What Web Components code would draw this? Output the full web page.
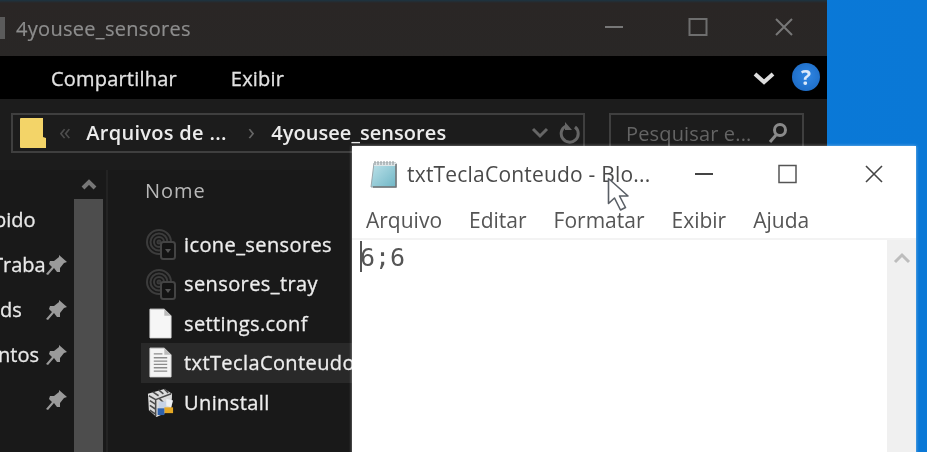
<!doctype html>
<html lang="pt"><head><meta charset="utf-8"><title>4yousee_sensores</title>
<style>
html,body{margin:0;height:100%;overflow:hidden;background:#0a78d6}
body{font-family:"Open Sans","Noto Sans",sans-serif}
</style></head><body>
<x-desktop>
  <x-explorer></x-explorer>
  <x-notepad></x-notepad>
  <x-pointer></x-pointer>
</x-desktop>
<script>
const ICONS={
 lockglobe:`<svg viewBox="0 0 30 32" width="30" height="32" fill="none"><g stroke="#3c3c3c" stroke-width="2"><circle cx="13" cy="14" r="12"/><circle cx="13" cy="14" r="8.500"/><circle cx="13" cy="14" r="5"/><circle cx="13" cy="14" r="1.500"/></g><rect x="15" y="14" width="14" height="17" rx="2.500" fill="#141414" stroke="#444" stroke-width="2"/><path d="M19 21h6l-3 4z" fill="#555"/></svg>`,
 blank:`<svg viewBox="0 0 24 32" width="23" height="31"><path d="M1 1h15l7 7v23H1z" fill="#f6f6f6" stroke="#ddd"/><path d="M16 1v7h7z" fill="#bbb"/></svg>`,
 text:`<svg viewBox="0 0 24 32" width="23" height="31"><path d="M1 1h15l7 7v23H1z" fill="#f4f4f4" stroke="#ddd"/><path d="M16 1v7h7z" fill="#bbb"/><path d="M5 7h9M5 11h14M5 14.500h14M5 18h14M5 21.500h14M5 25h14" stroke="#8b8b8b" stroke-width="1.400"/></svg>`,
 setup:`<svg viewBox="0 0 30 32" width="29" height="31"><path d="M2 7l17-5 8 5-1 17-15 7-8-7z" fill="#dcdcdc"/><path d="M3 9l7 4v17M10 13l16-6M4 14l6 4M4 19l6 4M4 24l6 4M7 5l6 4M13 3l5 4M19 2l4 4M14 12l4 4" stroke="#4a4a4a" stroke-width="1.600" fill="none"/><path d="M13 15h8v7h-8z" fill="#c7d3e6"/><path d="M19 21h9v6h-9z" fill="#e5a824"/><path d="M12 22h7v7h-7z" fill="#2f62ad"/><path d="M21 12l7 2-2 7-5-2z" fill="#eef1f5"/></svg>`,
 pin:`<svg viewBox="0 0 22 22" width="22" height="22"><path d="M13 1l8 7-3 1-4 5 0 4-3 0-3-4-6 7-2-1 6-7-3-3 1-3 4 0 5-4z" fill="#9a9a9a"/></svg>`,
 folder:`<svg viewBox="0 0 26 31" width="26" height="31"><path d="M0 1a1 1 0 0 1 1-1h22v19l3 1v10H1a1 1 0 0 1-1-1z" fill="#f3d468"/></svg>`,
 notepad:`<svg viewBox="0 0 28 28" width="28" height="28"><defs><linearGradient id="g" x1="0" y1="0" x2="1" y2="1"><stop offset="0" stop-color="#bfe3ea"/><stop offset="1" stop-color="#6fb6c6"/></linearGradient></defs><path d="M5 3h22v24H2z" fill="url(#g)" stroke="#9aa6ab"/><path d="M5 3h22v3H5z" fill="#dfe6e8"/><path d="M6 1v4M9 1v4M12 1v4M15 1v4M18 1v4M21 1v4M24 1v4" stroke="#8b9497"/><path d="M27 4v23H4" fill="none" stroke="#6d7477" stroke-width="1.500"/></svg>`
};
function def(name,html,init){customElements.define(name,class extends HTMLElement{
  constructor(){super();this.attachShadow({mode:"open"}).innerHTML=html}
  connectedCallback(){init&&init.call(this,this.shadowRoot)}
})}
def("x-desktop",`<style>
:host{display:block;position:relative;width:927px;height:452px;overflow:hidden;
background:linear-gradient(90deg,#0b74cf,#0a7bdc 40%,#0a78d6);filter:blur(.55px)}
</style><slot></slot>`);

def("x-file",`<style>
:host{display:flex;align-items:center;height:39.5px;padding-left:4px;gap:8px;color:#ededed;font-size:20px;letter-spacing:.4px;-webkit-text-stroke:.3px #ededed;white-space:nowrap;box-sizing:border-box}
:host([hot]){background:#292929}
#i{width:31px;display:flex;justify-content:center;flex:none}
</style><div id="i"></div><slot></slot>`,function(r){r.getElementById("i").innerHTML=ICONS[this.getAttribute("icon")]});

def("x-nav",`<style>
:host{display:flex;align-items:center;height:45px;width:74px;color:#e8e8e8;font-size:20px;-webkit-text-stroke:.3px #e8e8e8;box-sizing:border-box;overflow:hidden}
#t{flex:none;white-space:nowrap}
#p{flex:none;margin-left:1px;display:flex}
</style><div id="t"><slot></slot></div><div id="p"></div>`,function(r){
 if(this.hasAttribute("pin"))r.getElementById("p").innerHTML=ICONS.pin;
 const s=+(this.getAttribute("shift")||0),t=r.getElementById("t");
 t.style.marginLeft=s+"px";t.style.width=(45-s)+"px";
});

def("x-explorer",`<style>
:host{position:absolute;left:0;top:0;width:827px;height:452px;display:flex;flex-direction:column;background:#191919;overflow:hidden}
.title{height:56px;flex:none;box-sizing:border-box;background:linear-gradient(#1d3442 0,#2a2625 3px,#292726 100%);display:flex;align-items:center;color:#8d8d8d;font-size:20px;letter-spacing:.3px;-webkit-text-stroke:.2px #8d8d8d}
.mark{width:5px;height:22px;background:#5b5b5b;margin-right:11px;flex:none}
.title .name{flex:1}
.wb{flex:none;display:flex;align-items:center;justify-content:center;width:20px;height:20px;margin-top:-2px}
.ribbon{height:43px;flex:none;background:#000;display:flex;align-items:center;color:#e2e2e2;font-size:20px;letter-spacing:.2px;-webkit-text-stroke:.3px #e2e2e2}
.ribbon span:first-child{margin-left:51px;margin-top:2px}.ribbon span:nth-child(2){margin-left:54px;flex:1;margin-top:2px}
.help{width:28px;height:28px;border-radius:50%;background:radial-gradient(circle at 55% 45%,#2f86e4,#1864bd);color:#dbe9fa;font-weight:700;font-size:21px;display:flex;align-items:center;justify-content:center;margin:-1px 7px 0 17px;line-height:1;-webkit-text-stroke:0}
.addr{height:71px;flex:none;background:#1c1c1c;display:flex;align-items:flex-start;padding:14px 0 0 11px;box-sizing:border-box;gap:24px}
.box{height:40px;box-sizing:border-box;border:2px solid #3f3f3f;display:flex;align-items:center;flex:none}
.path{width:574px;padding-left:7px;color:#ececec;font-size:20px;font-weight:600;letter-spacing:.3px}
.path .t{margin-top:-2px}
.path .t2{letter-spacing:.05px}
.path .sm{color:#4d4d4d;font-size:24px;margin:-4px 15px 0 13px;font-weight:400;line-height:1}
.path .arr{color:#666;font-size:24px;margin:-4px 16px 0 21px;font-weight:400;line-height:1}
.path .end{margin-left:auto;display:flex;align-items:center;gap:10px;padding-right:2px}
.search{width:195px;padding-left:15px;color:#646464;font-size:20px;letter-spacing:.15px;justify-content:space-between;padding-right:14px}
.main{flex:1;display:flex;min-height:0}
.nav{width:108px;flex:none;display:flex;box-sizing:border-box;border-right:2px solid #232323}
.rows{width:74px;flex:none;padding-top:27px}
.sb{width:29px;flex:none;display:flex;flex-direction:column;align-items:center}
.sb .up{height:29px;flex:none;display:flex;align-items:center;justify-content:center}
.sb .th{flex:1;width:100%;background:#4d4d4d}
.files{flex:1;padding-left:33px}
.head{height:42px;color:#b8b8b8;font-size:20px;letter-spacing:1px;display:flex;align-items:center;padding-left:4px;margin-top:-1px}
.list{margin-top:13.500px}
</style>
<div class="title"><div class="mark"></div><div class="name">4yousee_sensores</div>
 <div class="wb" style="margin-right:64px"><svg width="20" height="4"><path d="M1 2h18" stroke="#777" stroke-width="2"/></svg></div>
 <div class="wb" style="margin-right:66px"><svg width="20" height="20"><rect x="1.500" y="2" width="17" height="16" fill="none" stroke="#6e6e6e" stroke-width="2"/></svg></div>
 <div class="wb" style="margin-right:33px"><svg width="20" height="20"><path d="M2 2l16 16M18 2L2 18" stroke="#777" stroke-width="2"/></svg></div>
</div>
<div class="ribbon"><span>Compartilhar</span><span>Exibir</span>
 <svg width="22" height="14"><path d="M2 3l9 8 9-8" fill="none" stroke="#ddd" stroke-width="4"/></svg>
 <div class="help">?</div></div>
<div class="addr">
 <div class="box path"><span style="display:flex">${ICONS.folder}</span><span class="sm">«</span><span class="t">Arquivos de ...</span><span class="arr">›</span><span class="t t2">4yousee_sensores</span>
  <span class="end"><svg width="18" height="12"><path d="M2 2l7 7 7-7" fill="none" stroke="#666" stroke-width="3"/></svg>
  <svg width="22" height="24"><path d="M7 5a8.500 8.500 0 1 0 9 1" fill="none" stroke="#666" stroke-width="3"/><path d="M6 1v8h7z" fill="#666"/></svg></span></div>
 <div class="box search"><span>Pesquisar e...</span><svg width="20" height="22"><circle cx="12" cy="8" r="5.500" fill="none" stroke="#8a8a8a" stroke-width="3"/><path d="M8 13l-6 7" stroke="#8a8a8a" stroke-width="3"/></svg></div>
</div>
<div class="main">
 <div class="nav"><div class="rows">
   <x-nav shift="-6">pido</x-nav><x-nav pin shift="-8">Traba</x-nav><x-nav pin>ds</x-nav><x-nav pin shift="-2">ntos</x-nav><x-nav pin></x-nav>
  </div>
  <div class="sb"><div class="up"><svg width="16" height="11"><path d="M2 9l6-6 6 6" fill="none" stroke="#777" stroke-width="4"/></svg></div><div class="th"></div></div>
 </div>
 <div class="files"><div class="head">Nome</div>
  <div class="list">
  <x-file icon="lockglobe">icone_sensores</x-file>
  <x-file icon="lockglobe">sensores_tray</x-file>
  <x-file icon="blank">settings.conf</x-file>
  <x-file icon="text" hot>txtTeclaConteudo</x-file>
  <x-file icon="setup">Uninstall</x-file>
  </div>
 </div>
</div>`);

def("x-notepad",`<style>
:host{position:absolute;left:352px;top:146px;width:564px;height:320px;background:#fff;display:flex;flex-direction:column;color:#4a4a4a;box-shadow:0 0 3px rgba(255,255,255,.5)}
.t{height:55px;flex:none;display:flex;align-items:center;font-size:21px;letter-spacing:.2px}
.ic{margin:0 10px 0 17px;display:flex}
.nm{flex:none;width:257px;white-space:nowrap}
.b{width:20px;height:20px;display:flex;flex:none}
.m{height:39px;flex:none;display:flex;align-items:center;font-size:21px;color:#555;padding-left:14px;gap:27px;border-bottom:2px solid #f3f3f3;box-sizing:border-box}
.e{flex:1;display:flex;min-height:0}
.tx{flex:1;padding:1px 0 0 8px;font:25px/33px "DejaVu Sans Mono","Liberation Mono",monospace;color:#555;position:relative}
.c{display:inline-block;width:1.500px;height:31px;background:#555;vertical-align:top;margin-right:-1.500px}
.s{width:29px;flex:none;background:#f0f0f0;display:flex;justify-content:center;padding-top:12px;box-sizing:border-box}
</style>
<div class="t"><span class="ic">${ICONS.notepad}</span><span class="nm">txtTeclaConteudo - Blo...</span>
 <span class="b" style="margin-left:30px"><svg width="20" height="20"><path d="M1 10h18" stroke="#444" stroke-width="2"/></svg></span>
 <span class="b" style="margin-left:64px"><svg width="20" height="20"><rect x="1" y="1.500" width="17" height="17" fill="none" stroke="#555" stroke-width="1.500"/></svg></span>
 <span class="b" style="margin-left:66px"><svg width="20" height="20"><path d="M2 2l16 16M18 2L2 18" stroke="#444" stroke-width="1.600"/></svg></span>
</div>
<div class="m"><span>Arquivo</span><span>Editar</span><span>Formatar</span><span>Exibir</span><span>Ajuda</span></div>
<div class="e"><div class="tx"><span class="c"></span>6;6</div>
 <div class="s"><svg width="18" height="12"><path d="M2 10l7-7 7 7" fill="none" stroke="#bdbdbd" stroke-width="3"/></svg></div></div>`);

def("x-pointer",`<style>
:host{position:absolute;left:607px;top:177px;width:24px;height:36px;display:block}
</style><svg width="24" height="36" viewBox="0 0 24 36"><path d="M1.500 1.500v25l6-5.500 6 12 5-2.500-6-11.500h8.500z" fill="#fff" stroke="#5a5f66" stroke-width="1.600" stroke-linejoin="round"/></svg>`);
</script>
</body></html>
